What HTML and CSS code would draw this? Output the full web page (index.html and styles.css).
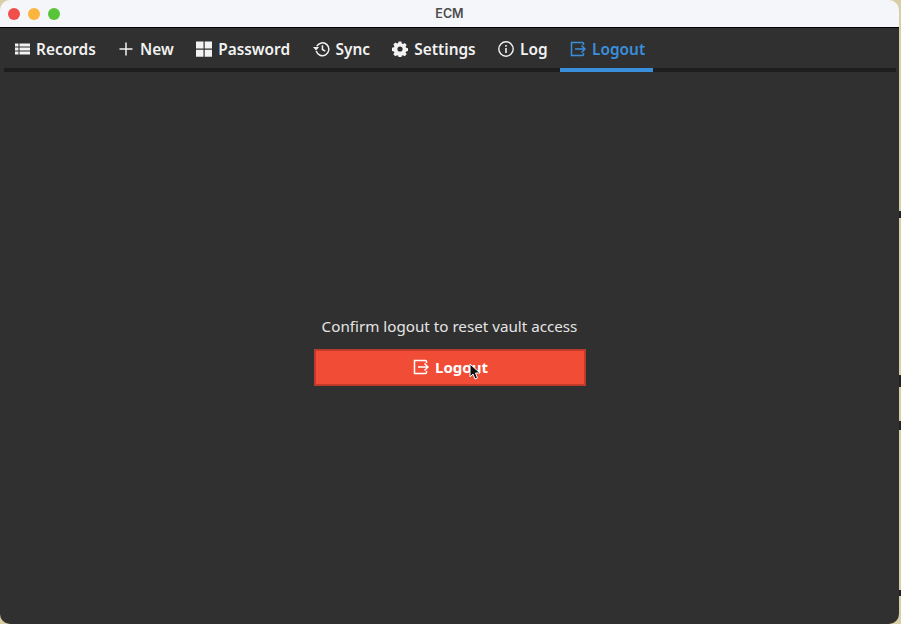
FILE: index.html
```html
<!DOCTYPE html>
<html lang="en">
<head>
    <meta charset="UTF-8">
    <title>ECM</title>
    <link rel="stylesheet" href="styles.css">
</head>
<body>
    <div class="window">
        <div class="titlebar">
            <div class="lights">
                <span class="light red"></span>
                <span class="light yellow"></span>
                <span class="light green"></span>
            </div>
            <div class="title">ECM</div>
        </div>
        <div class="content">
            <div class="tabs">
                <div class="tab">
                    <svg class="icon" viewBox="0 0 16 16"><path fill="currentColor" d="M1 2.500h3.500v3H1zM5.500 2.500H16v3H5.500zM1 6.500h3.500v3H1zM5.500 6.500H16v3H5.500zM1 10.500h3.500v3H1zM5.500 10.500H16v3H5.500z"/></svg>
                    <span>Records</span>
                </div>
                <div class="tab">
                    <svg class="icon" viewBox="0 0 16 16"><path fill="none" stroke="currentColor" stroke-width="1.500" d="M8 1.500v13M1.500 8h13"/></svg>
                    <span>New</span>
                </div>
                <div class="tab">
                    <svg class="icon" viewBox="0 0 16 16"><path fill="currentColor" d="M0 .5h7.500v7H0zM8.700.5H16v7H8.700zM0 8.700h7.500v7H0zM8.700 8.700H16v7H8.700z"/></svg>
                    <span>Password</span>
                </div>
                <div class="tab">
                    <svg class="icon wide" viewBox="0 0 18 16"><path fill="none" stroke="currentColor" stroke-width="1.600" d="M4 5a6.800 6.800 0 1 1-.6 5M10 4v4.500l3 1.800"/><path fill="currentColor" d="M0 6h6.500L3.200 9.500z"/></svg>
                    <span>Sync</span>
                </div>
                <div class="tab">
                    <svg class="icon" viewBox="0 0 16 16"><path fill="currentColor" fill-rule="evenodd" d="M6.600.5h2.800l.4 2 1.200.5 1.700-1.100 2 2-1.100 1.700.5 1.200 2 .4v2.800l-2 .4-.5 1.200 1.100 1.700-2 2-1.700-1.100-1.200.5-.4 2H6.600l-.4-2-1.200-.5-1.700 1.100-2-2 1.100-1.700-.5-1.200-2-.4V6.700l2-.4.5-1.200-1.100-1.700 2-2 1.700 1.100 1.200-.5zM8 5.400a2.600 2.600 0 1 0 0 5.200 2.600 2.600 0 0 0 0-5.200z"/></svg>
                    <span>Settings</span>
                </div>
                <div class="tab">
                    <svg class="icon" viewBox="0 0 16 16"><circle cx="8" cy="8" r="7.200" fill="none" stroke="currentColor" stroke-width="1.400"/><path fill="currentColor" d="M7.200 7h1.600v5H7.200zM7.200 4h1.600v1.700H7.200z"/></svg>
                    <span>Log</span>
                </div>
                <div class="tab active">
                    <svg class="icon" viewBox="0 0 16 16"><path fill="none" stroke="currentColor" stroke-width="1.500" d="M13.500 4V2.500a1 1 0 0 0-1-1h-11v13h11a1 1 0 0 0 1-1V12M5 8h10M11.500 4.500 15 8l-3.500 3.500"/></svg>
                    <span>Logout</span>
                </div>
            </div>
            <div class="panel">
                <p class="message">Confirm logout to reset vault access</p>
                <button type="button" class="logout">
                    <svg class="icon" viewBox="0 0 16 16"><path fill="none" stroke="currentColor" stroke-width="1.500" d="M13.500 4V2.500a1 1 0 0 0-1-1h-11v13h11a1 1 0 0 0 1-1V12M5 8h10M11.500 4.500 15 8l-3.500 3.500"/></svg>
                    <span>Logout</span>
                    <svg class="cursor" viewBox="0 0 12 18"><path fill="#111" stroke="#fff" stroke-width="1" d="M1 1v13l3-3 2 5 2.500-1-2-5h4.500z"/></svg>
                </button>
            </div>
        </div>
    </div>
</body>
</html>
```

FILE: styles.css
```css
html, body {
    margin: 0;
    height: 100%;
}
/* desktop showing behind the window, a few dark marks at the right edge */
html {
    background: linear-gradient(#d9cfa6 211px, #222 211px, #222 218px, #d9cfa6 218px, #d9cfa6 375px, #222 375px, #222 387px, #d9cfa6 387px, #d9cfa6 421px, #222 421px, #222 430px, #d9cfa6 430px, #d9cfa6 590px, #222 590px, #222 596px, #d9cfa6 596px);
}
.window {
    width: 899px;
    height: 624px;
    display: flex;
    flex-direction: column;
    border-radius: 10px;
    overflow: hidden;
    font-family: "Noto Sans", sans-serif;
}
.titlebar {
    height: 27px;
    flex: none;
    background: #f5f6f9;
    border-bottom: 1px solid #000;
    display: flex;
    align-items: center;
    position: relative;
}
.lights {
    display: flex;
    gap: 8px;
    padding-left: 8px;
}
.light {
    width: 12px;
    height: 12px;
    border-radius: 50%;
}
.red { background: #f0504c; }
.yellow { background: #fbb53f; }
.green { background: #58c43a; }
.title {
    position: absolute;
    left: 0;
    width: 100%;
    text-align: center;
    font-family: "Inter", sans-serif;
    font-size: 12.5px;
    font-weight: 600;
    color: #4c4c4c;
}
.content {
    flex: 1;
    background: #303030;
    display: flex;
    flex-direction: column;
}
.tabs {
    display: flex;
    gap: 2.4px;
    margin: 0 3px 0 4px;
    height: 40px;
    border-bottom: 4px solid #1e1e1e;
    color: #f2f2f2;
    font-size: 15.4px;
    font-weight: 600;
}
.tab {
    display: flex;
    align-items: center;
    gap: 6px;
    padding: 2px 10px 0;
    margin-bottom: -4px;
    border-bottom: 4px solid transparent;
}
.tab .icon {
    width: 16px;
    height: 16px;
}
.tab .icon.wide {
    width: 17px;
}
.tab.active {
    padding-right: 8px;
    color: #3a8fdc;
    border-bottom-color: #3a8fdc;
}
.panel {
    flex: 1;
    display: flex;
    flex-direction: column;
    align-items: center;
    justify-content: center;
    padding-top: 6px;
}
.message {
    margin: 0 0 13px;
    font-size: 15.2px;
    line-height: 20px;
    color: #e4e4e4;
}
.logout {
    position: relative;
    width: 272px;
    height: 37px;
    padding: 0 0 2px 2px;
    display: flex;
    align-items: center;
    justify-content: center;
    gap: 6px;
    background: #f04c36;
    border: 1px solid #b83a2a;
    outline: 1px solid #c43b2b;
    outline-offset: -2px;
    color: #fff;
    font-family: "Noto Sans", sans-serif;
    font-size: 15px;
    font-weight: 700;
}
.logout .icon {
    width: 16px;
    height: 16px;
}
.cursor {
    position: absolute;
    left: 154px;
    top: 13px;
    width: 12px;
    height: 18px;
}
```
